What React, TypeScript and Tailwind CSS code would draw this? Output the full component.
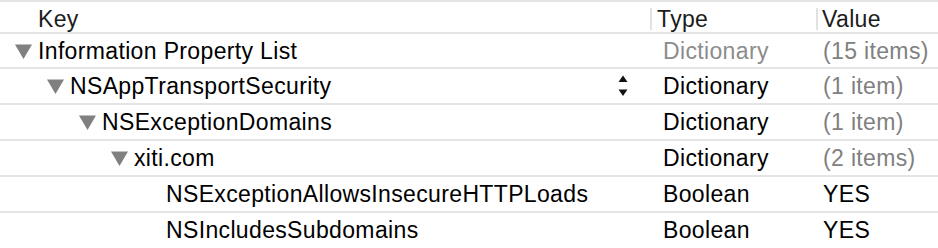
type Row = {
  key: string;
  level: number;
  expandable: boolean;
  type: string;
  value: string;
  dimType?: boolean;
  dimValue?: boolean;
  stepper?: boolean;
};

const rows: Row[] = [
  { key: "Information Property List", level: 0, expandable: true, type: "Dictionary", value: "(15 items)", dimType: true, dimValue: true },
  { key: "NSAppTransportSecurity", level: 1, expandable: true, type: "Dictionary", value: "(1 item)", dimValue: true, stepper: true },
  { key: "NSExceptionDomains", level: 2, expandable: true, type: "Dictionary", value: "(1 item)", dimValue: true },
  { key: "xiti.com", level: 3, expandable: true, type: "Dictionary", value: "(2 items)", dimValue: true },
  { key: "NSExceptionAllowsInsecureHTTPLoads", level: 4, expandable: false, type: "Boolean", value: "YES" },
  { key: "NSIncludesSubdomains", level: 4, expandable: false, type: "Boolean", value: "YES" },
];

const indents = ["pl-[15px]", "pl-[47px]", "pl-[79px]", "pl-[111px]", "pl-[143px]"];
const heights = ["h-[35px]", "h-[36px]", "h-[36px]", "h-[36px]", "h-[36px]", "h-[35px]"];

function Disclosure() {
  return (
    <svg width="17" height="15" viewBox="0 0 17 15" className="mr-[6px] shrink-0">
      <path d="M0 0.5 L17 0.5 L8.5 15 Z" fill="#808080" />
    </svg>
  );
}

function Stepper() {
  return (
    <svg width="10" height="22" viewBox="0 0 10 22" className="mr-[22px] shrink-0">
      <path d="M5 0.5 L9.5 7 L0.5 7 Z" fill="#111" />
      <path d="M0.5 14.5 L9.5 14.5 L5 21 Z" fill="#111" />
    </svg>
  );
}

export default function App() {
  return (
    <div
      className="w-[938px] h-[248px] overflow-hidden bg-white text-[23px] tracking-[0.35px] text-black"
      style={{ fontFamily: '"Liberation Sans", Arial, sans-serif' }}
    >
      <div className="grid grid-cols-[650px_166px_1fr] h-[34px] border-y-2 border-[#e4e4e4] items-center">
        <div className="pl-[38px] text-[#1c1c1c]">Key</div>
        <div className="flex items-center h-full">
          <div className="w-[2px] h-[22px] bg-[#e2e2e2] mr-[5px]" />
          <span className="text-[#1c1c1c]">Type</span>
        </div>
        <div className="flex items-center h-full">
          <div className="w-[2px] h-[22px] bg-[#e2e2e2] mr-[4px]" />
          <span className="text-[#1c1c1c]">Value</span>
        </div>
      </div>
      {rows.map((r, i) => (
        <div
          key={r.key}
          className={`grid grid-cols-[650px_166px_1fr] items-center ${heights[i]} ${i < rows.length - 1 ? "border-b-2 border-[#e4e4e4]" : ""}`}
        >
          <div className={`flex items-center ${indents[r.level]}`}>
            {r.expandable ? <Disclosure /> : <div className="w-[23px] shrink-0" />}
            <span className="whitespace-nowrap">{r.key}</span>
            <div className="flex-1" />
            {r.stepper && <Stepper />}
          </div>
          <div className={`pl-[13px] ${r.dimType ? "text-[#8c8c8c]" : "text-black"}`}>{r.type}</div>
          <div className={`pl-[7px] whitespace-nowrap ${r.dimValue ? "text-[#808080]" : "text-black"}`}>{r.value}</div>
        </div>
      ))}
    </div>
  );
}
